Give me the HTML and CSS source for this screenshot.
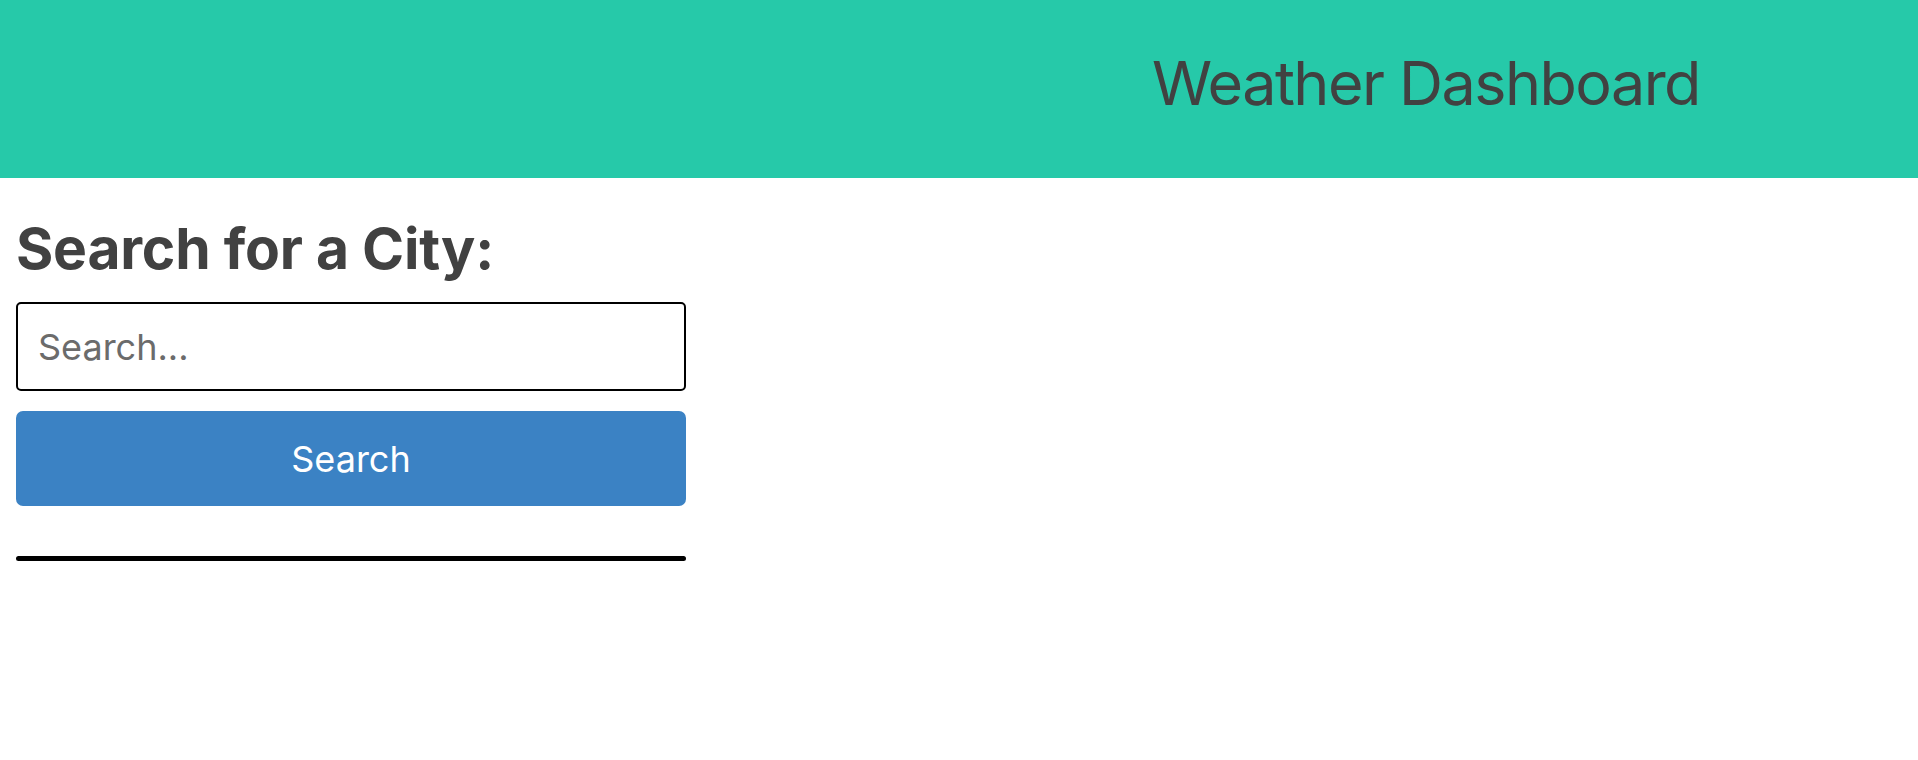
FILE: index.html
```html
<!DOCTYPE html>
<html lang="en">
<head>
<meta charset="utf-8">
<title>Weather Dashboard</title>
<link rel="stylesheet" href="styles.css">
</head>
<body>
<header class="hero">
  <h1 class="hero-title">Weather Dashboard</h1>
</header>
<main class="layout">
  <aside class="search-panel">
    <h2 class="search-heading">Search for a City:</h2>
    <input class="search-input" type="text" placeholder="Search...">
    <button class="search-button" type="button">Search</button>
    <ul class="history"></ul>
  </aside>
</main>
</body>
</html>
```

FILE: styles.css
```css
html, body {
  margin: 0;
  padding: 0;
  background: #ffffff;
}

body {
  font-family: "Inter", "Noto Sans", sans-serif;
  color: #414141;
}

.hero {
  height: 178px;
  box-sizing: border-box;
  background: #26c9a9;
  display: flex;
  align-items: center;
  justify-content: center;
  padding: 0 0 12px 934px;
}

.hero-title {
  margin: 0;
  font-size: 61px;
  font-weight: 400;
  letter-spacing: -0.025em;
  line-height: normal;
  color: #414141;
}

.layout {
  display: flex;
  padding: 37px 16px 0;
}

.search-panel {
  width: 670px;
  display: flex;
  flex-direction: column;
}

.search-heading {
  margin: 0 0 19px;
  font-size: 57px;
  font-weight: 700;
  line-height: 68px;
  letter-spacing: -0.004em;
  color: #414141;
}

.search-input {
  height: 89px;
  box-sizing: border-box;
  border: 2px solid #000;
  border-radius: 5px;
  padding: 0 20px;
  font-family: "Inter", "Noto Sans", sans-serif;
  font-size: 36px;
  color: #333;
  margin: 0 0 20px;
  outline: none;
}

.search-input::placeholder {
  color: #6b6b6b;
}

.search-button {
  height: 95px;
  border: none;
  border-radius: 7px;
  background: #3b82c4;
  color: #ffffff;
  font-family: "Inter", "Noto Sans", sans-serif;
  font-size: 36px;
  cursor: pointer;
  margin: 0;
}

.history {
  list-style: none;
  margin: 50px 0 0;
  padding: 0;
  height: 0;
  border-bottom: 5px solid #000;
  border-radius: 6px;
}
```
